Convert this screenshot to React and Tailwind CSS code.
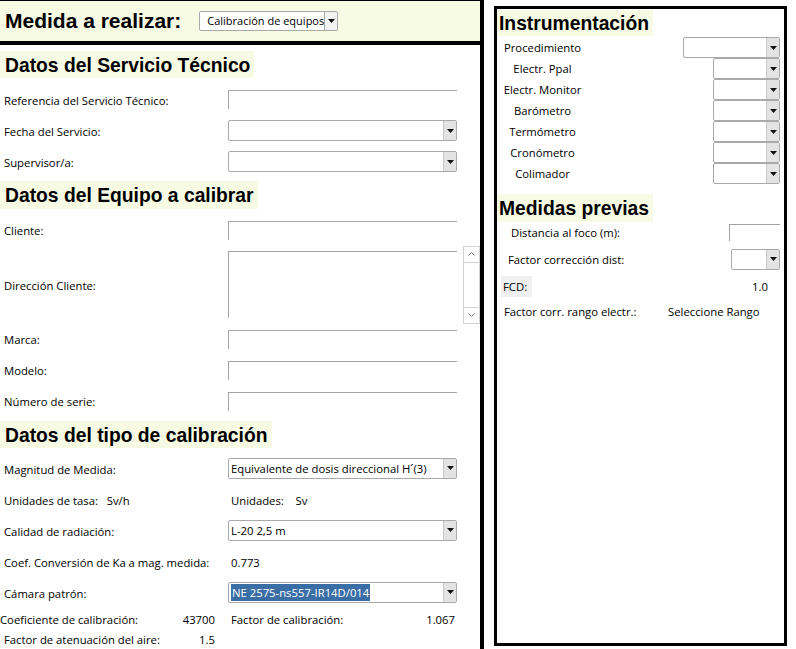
import React from 'react';

const ui = { fontFamily: '"Open Sans", "Noto Sans", sans-serif' };
const head = { fontFamily: '"Liberation Sans", Arial, sans-serif' };

const Arrow = () => (
  <svg width="7" height="4" viewBox="0 0 7 4" className="block">
    <path d="M0 0h7L3.5 4z" fill="#111" />
  </svg>
);

const Chevron = ({ up }) => (
  <svg width="7" height="4" viewBox="0 0 7 4" className="block">
    <path d={up ? 'M0.5 3.5L3.5 0.5L6.5 3.5' : 'M0.5 0.5L3.5 3.5L6.5 0.5'} fill="none" stroke="#808080" strokeWidth="1" />
  </svg>
);

// combo estilo windows
const Combo = ({ value, className = '', highlight }) => (
  <div className={`flex h-[21px] border border-[#a9a9a9] rounded-[2px] bg-white overflow-hidden ${className}`}>
    <div className="flex-1 flex items-center pl-[2px] text-[11.3px] text-black whitespace-nowrap overflow-hidden">
      {value && (
        <span className={highlight ? 'bg-[#3a6ea5] text-white px-[1px] leading-[17px]' : 'leading-[17px]'}>{value}</span>
      )}
    </div>
    <div className="w-[13px] bg-[#e3e3e3] border-l border-[#c8c8c8] flex items-center justify-center">
      <Arrow />
    </div>
  </div>
);

const TextBox = ({ className = '' }) => (
  <div className={`border-t border-l border-[#a3a3a3] bg-white ${className}`} />
);

const Heading = ({ children, className = '' }) => (
  <div className={`self-start h-[28px] flex items-center bg-[#f7fbe4] pl-[5px] pr-[4px] pt-[2px] ${className}`}>
    <span style={head} className="text-[19.3px] font-bold text-black leading-none">{children}</span>
  </div>
);

const Row = ({ label, children, h = 'h-[31px]' }) => (
  <div className={`flex items-center ${h}`}>
    <div className="w-[228px] pl-[4px] pt-[3px] text-[11.3px] text-black">{label}</div>
    <div className="w-[229px]">{children}</div>
  </div>
);

const InstRow = ({ label, w }) => (
  <div className="flex items-center h-[21px]">
    <div className="w-[79px] pt-[1px] text-center text-[11.3px] text-black whitespace-nowrap">{label}</div>
    <div className="flex-1 flex justify-end pr-[4px]">
      <Combo className={w} />
    </div>
  </div>
);

export default function App() {
  return (
    <div style={ui} className="flex w-[796px] h-[649px] bg-white overflow-hidden">
      {/* Panel izquierdo */}
      <div className="w-[480px] flex flex-col">
        <div className="h-[45px] shrink-0 bg-[#f7fbe4] border-t border-b-4 border-black flex items-center pl-[5px]">
          <span style={head} className="text-[21px] font-bold text-black">Medida a realizar:</span>
          <div className="ml-[18px] flex h-[20px] w-[139px] border border-[#a9a9a9] rounded-[2px] bg-white overflow-hidden">
            <div className="flex-1 flex items-center pl-[7px] text-[11px] whitespace-nowrap overflow-hidden">Calibración de equipos</div>
            <div className="w-[13px] bg-[#f3f3f3] border-l border-[#a9a9a9] flex items-center justify-center">
              <Arrow />
            </div>
          </div>
        </div>

        <Heading className="mt-[6px]">Datos del Servicio Técnico</Heading>
        <div className="mt-[6px]">
          <Row label="Referencia del Servicio Técnico:"><TextBox className="h-[19px]" /></Row>
          <Row label="Fecha del Servicio:"><Combo /></Row>
          <Row label="Supervisor/a:"><Combo /></Row>
        </div>

        <Heading className="mt-[4px]">Datos del Equipo a calibrar</Heading>
        <div className="mt-[6px]">
          <Row label="Cliente:"><TextBox className="h-[19px]" /></Row>
          <div className="flex items-center h-[78px]">
            <div className="w-[228px] pl-[4px] pt-[3px] text-[11.3px]">Dirección Cliente:</div>
            <TextBox className="w-[229px] h-[67px]" />
            <div className="ml-[6px] w-[17px] h-[78px] border border-[#d2d2d2] flex flex-col justify-between">
              <div className="h-[16px] border-b border-[#d2d2d2] flex items-center justify-center"><Chevron up /></div>
              <div className="h-[16px] border-t border-[#d2d2d2] flex items-center justify-center"><Chevron /></div>
            </div>
          </div>
          <Row label="Marca:"><TextBox className="h-[19px]" /></Row>
          <Row label="Modelo:"><TextBox className="h-[19px]" /></Row>
          <Row label="Número de serie:"><TextBox className="h-[19px]" /></Row>
        </div>

        <Heading className="mt-[4px]">Datos del tipo de calibración</Heading>
        <div className="mt-[5px] text-[11.3px]">
          <Row label="Magnitud de Medida:"><Combo value="Equivalente de dosis direccional H´(3)" /></Row>
          <div className="flex items-center h-[31px] pt-[3px]">
            <div className="w-[231px] pl-[4px]">Unidades de tasa:&nbsp;&nbsp; Sv/h</div>
            <div>Unidades:&nbsp;&nbsp;&nbsp; Sv</div>
          </div>
          <Row label="Calidad de radiación:"><Combo value="L-20 2,5 m" /></Row>
          <div className="flex items-center h-[31px] pt-[3px]">
            <div className="w-[231px] pl-[4px]">Coef. Conversión de Ka a mag. medida:</div>
            <div>0.773</div>
          </div>
          <Row label="Cámara patrón:"><Combo value="NE 2575-ns557-IR14D/014" highlight /></Row>
          <div className="mt-[1px] flex items-center h-[20px] pt-[2px]">
            <div className="w-[215px] flex justify-between">
              <span>Coeficiente de calibración:</span>
              <span>43700</span>
            </div>
            <div className="ml-[16px] w-[224px] flex justify-between">
              <span>Factor de calibración:</span>
              <span>1.067</span>
            </div>
          </div>
          <div className="flex items-center h-[20px] pt-[2px]">
            <div className="w-[215px] pl-[4px] flex justify-between">
              <span>Factor de atenuación del aire:</span>
              <span>1.5</span>
            </div>
          </div>
        </div>
      </div>

      {/* separador */}
      <div className="w-[4px] bg-black" />

      {/* Panel derecho */}
      <div className="ml-[10px] mt-[6px] w-[293px] h-[640px] border-[3px] border-black flex flex-col">
        <Heading className="mt-[1px] !h-[26px] !pl-[2px]">Instrumentación</Heading>
        <div className="mt-[1px] pl-[6px]">
          <InstRow label="Procedimiento" w="w-[97px]" />
          <InstRow label="Electr. Ppal" w="w-[67px]" />
          <InstRow label="Electr. Monitor" w="w-[67px]" />
          <InstRow label="Barómetro" w="w-[67px]" />
          <InstRow label="Termómetro" w="w-[67px]" />
          <InstRow label="Cronómetro" w="w-[67px]" />
          <InstRow label="Colimador" w="w-[67px]" />
        </div>

        <Heading className="mt-[10px] !pl-[2px]">Medidas previas</Heading>
        <div className="text-[11.3px]">
          <div className="flex items-center h-[20px]">
            <div className="pl-[14px] pt-[2px] flex-1">Distancia al foco (m):</div>
            <TextBox className="w-[51px] h-[17px] mr-[4px]" />
          </div>
          <div className="flex items-center h-[22px] mt-[6px]">
            <div className="pl-[11px] pt-[2px] flex-1">Factor corrección dist:</div>
            <Combo className="w-[49px] mr-[4px]" />
          </div>
          <div className="flex items-center h-[21px] mt-[6px]">
            <div className="ml-[4px] w-[31px] h-[21px] bg-[#f0f0f0] flex items-center pl-[2px] pt-[1px]">FCD:</div>
            <div className="flex-1 text-right pr-[16px] pt-[1px]">1.0</div>
          </div>
          <div className="flex items-center h-[20px] mt-[5px]">
            <div className="pl-[7px] w-[171px]">Factor corr. rango electr.:</div>
            <div>Seleccione Rango</div>
          </div>
        </div>
      </div>
    </div>
  );
}
